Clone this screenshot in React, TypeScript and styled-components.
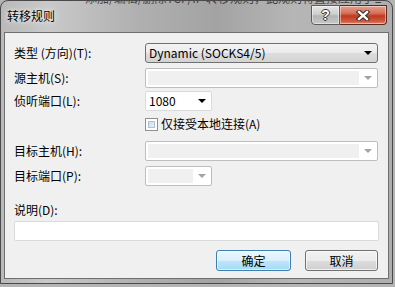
import React from "react";
import styled, { createGlobalStyle } from "styled-components";

const GlobalStyle = createGlobalStyle`
  html, body {
    margin: 0;
    padding: 0;
    background: #b4b4b4;
    font-family: "Noto Sans CJK SC", "Liberation Sans", sans-serif;
  }
`;

const Window = styled.div`
  position: relative;
  box-sizing: border-box;
  width: 393px;
  height: 284px;
  border: 1px solid #4a4a4a;
  border-radius: 8px 8px 0 0;
  background: linear-gradient(
    90deg,
    #b9b9b9 0%,
    #c9c9c9 12%,
    #b0b0b0 35%,
    #a3a3a3 55%,
    #b6b6b6 75%,
    #aeaeae 100%
  );
  display: flex;
  flex-direction: column;
  overflow: hidden;
`;

const GhostStrip = styled.div`
  position: absolute;
  top: 0;
  left: 84px;
  height: 4px;
  width: 296px;
  overflow: hidden;
  opacity: 0.75;
`;

const GhostText = styled.div`
  margin-top: -9px;
  font-size: 12px;
  line-height: 12px;
  color: #1a1a1a;
  white-space: nowrap;
`;

const TitleBar = styled.div`
  height: 31px;
  display: flex;
  justify-content: space-between;
  align-items: flex-start;
  padding: 0 5px 0 6px;
`;

const Title = styled.div`
  margin-top: 7px;
  font-size: 12px;
  line-height: 16px;
  color: #000;
  text-shadow: 0 0 6px rgba(255, 255, 255, 0.9), 0 0 3px rgba(255, 255, 255, 0.8);
`;

const CaptionGroup = styled.div`
  display: flex;
  margin-top: 4px;
`;

const CaptionButton = styled.div<{ $kind: "help" | "close" }>`
  box-sizing: border-box;
  height: 20px;
  width: ${(p) => (p.$kind === "help" ? "29px" : "47px")};
  display: flex;
  align-items: center;
  justify-content: center;
  border: 1px solid ${(p) => (p.$kind === "help" ? "#5c5c5c" : "#5b2a20")};
  border-left-width: ${(p) => (p.$kind === "help" ? "1px" : "0")};
  border-radius: ${(p) => (p.$kind === "help" ? "0 0 0 4px" : "0 0 4px 0")};
  background: ${(p) =>
    p.$kind === "help"
      ? "linear-gradient(180deg, #e6e6e6 0%, #cfcfcf 45%, #b4b4b4 55%, #c8c8c8 100%)"
      : "linear-gradient(180deg, #e6a08e 0%, #d6705a 40%, #c0391f 55%, #cf5a40 85%, #e08a70 100%)"};
  box-shadow: inset 0 0 0 1px rgba(255, 255, 255, 0.45);
`;

const HelpGlyph = styled.span`
  font-family: "Liberation Sans", sans-serif;
  font-weight: 700;
  font-size: 14px;
  line-height: 14px;
  color: #fff;
  text-shadow: 1px 0 0 #333, -1px 0 0 #333, 0 1px 0 #333, 0 -1px 0 #333;
`;

const Client = styled.div`
  box-sizing: border-box;
  margin-left: 3px;
  width: 385px;
  height: 247px;
  border: 1px solid #6f6f6f;
  background: #f0f0f0;
  padding: 10px 10px 0 9px;
  display: flex;
  flex-direction: column;
  font-size: 12px;
  color: #000;
`;

const Row = styled.div<{ $mt: number }>`
  display: grid;
  grid-template-columns: 131px 1fr;
  align-items: center;
  height: 20px;
  margin-top: ${(p) => p.$mt}px;
`;

const Label = styled.div`
  font-size: 12px;
  line-height: 16px;
  white-space: nowrap;
`;

const Combo = styled.div<{ $w: number; $variant: "button" | "edit" | "disabled" }>`
  box-sizing: border-box;
  width: ${(p) => p.$w}px;
  height: 20px;
  display: flex;
  align-items: center;
  border-radius: ${(p) => (p.$variant === "button" ? "3px" : "2px")};
  border: 1px solid
    ${(p) =>
      p.$variant === "button" ? "#707070" : p.$variant === "edit" ? "#dadada" : "#bdbdbd"};
  background: ${(p) =>
    p.$variant === "button"
      ? "linear-gradient(180deg, #f3f3f3 0%, #ebebeb 50%, #dddddd 51%, #d3d3d3 100%)"
      : "#ffffff"};
`;

const ComboText = styled.div`
  flex: 1;
  padding-left: 3px;
  font-size: 12px;
  line-height: 16px;
  white-space: nowrap;
`;

const ComboFill = styled.div`
  flex: 1;
  align-self: stretch;
  margin: 2px 0 2px 2px;
  background: #f0f0f0;
`;

const ArrowBox = styled.div`
  width: 18px;
  display: flex;
  justify-content: center;
  align-items: center;
`;

const Arrow = styled.div<{ $disabled?: boolean }>`
  width: 0;
  height: 0;
  border-left: 4px solid transparent;
  border-right: 4px solid transparent;
  border-top: 4px solid ${(p) => (p.$disabled ? "#a3a3a3" : "#000")};
`;

const CheckLine = styled.div`
  grid-column: 2;
  display: flex;
  align-items: center;
  gap: 3px;
`;

const CheckBox = styled.div`
  box-sizing: border-box;
  width: 13px;
  height: 13px;
  border: 1px solid #8f8f8f;
  background: #fff;
  padding: 2px;
  display: flex;
`;

const CheckInner = styled.div`
  flex: 1;
  border: 1px solid #a9c3da;
  background: linear-gradient(135deg, #cfdbe8 0%, #eaf1f8 100%);
`;

const NoteLabel = styled(Label)`
  margin-top: 16px;
  height: 16px;
`;

const TextInput = styled.div`
  box-sizing: border-box;
  margin-top: 3px;
  width: 365px;
  height: 20px;
  border: 1px solid #dadada;
  border-radius: 2px;
  background: #fff;
`;

const ButtonRow = styled.div`
  margin-top: 9px;
  display: flex;
  justify-content: flex-end;
  gap: 14px;
`;

const Button = styled.div<{ $default?: boolean; $w: number }>`
  box-sizing: border-box;
  width: ${(p) => p.$w}px;
  height: 21px;
  display: flex;
  align-items: center;
  justify-content: center;
  font-size: 12px;
  border-radius: 3px;
  border: 1px solid ${(p) => (p.$default ? "#3c7fb1" : "#707070")};
  background: ${(p) =>
    p.$default
      ? "linear-gradient(180deg, #eaf6fd 0%, #d9f0fc 50%, #bee6fd 51%, #a7d9f5 100%)"
      : "linear-gradient(180deg, #f2f2f2 0%, #ebebeb 50%, #dddddd 51%, #cfcfcf 100%)"};
  box-shadow: inset 0 0 0 1px ${(p) => (p.$default ? "rgba(255,255,255,0.6)" : "rgba(255,255,255,0.7)")};
`;

const CloseIcon = () => (
  <svg width="14" height="11" viewBox="0 0 14 11">
    <g strokeLinecap="square">
      <line x1="3" y1="2" x2="11" y2="9" stroke="#3a2a26" strokeWidth="4.4" />
      <line x1="11" y1="2" x2="3" y2="9" stroke="#3a2a26" strokeWidth="4.4" />
      <line x1="3" y1="2" x2="11" y2="9" stroke="#ffffff" strokeWidth="2.4" />
      <line x1="11" y1="2" x2="3" y2="9" stroke="#ffffff" strokeWidth="2.4" />
    </g>
  </svg>
);

const DisabledCombo = ({ w }: { w: number }) => (
  <Combo $w={w} $variant="disabled">
    <ComboFill />
    <ArrowBox>
      <Arrow $disabled />
    </ArrowBox>
  </Combo>
);

export default function App() {
  return (
    <>
      <GlobalStyle />
      <Window>
        <GhostStrip>
          <GhostText>添加/编辑/删除TCP/IP 转移规则，此规则将直接应用于当前连接</GhostText>
        </GhostStrip>
        <TitleBar>
          <Title>转移规则</Title>
          <CaptionGroup>
            <CaptionButton $kind="help">
              <HelpGlyph>?</HelpGlyph>
            </CaptionButton>
            <CaptionButton $kind="close">
              <CloseIcon />
            </CaptionButton>
          </CaptionGroup>
        </TitleBar>
        <Client>
          <Row $mt={0}>
            <Label>类型 (方向)(T):</Label>
            <Combo $w={233} $variant="button">
              <ComboText>Dynamic (SOCKS4/5)</ComboText>
              <ArrowBox>
                <Arrow />
              </ArrowBox>
            </Combo>
          </Row>
          <Row $mt={5}>
            <Label>源主机(S):</Label>
            <DisabledCombo w={233} />
          </Row>
          <Row $mt={3}>
            <Label>侦听端口(L):</Label>
            <Combo $w={67} $variant="edit">
              <ComboText>1080</ComboText>
              <ArrowBox>
                <Arrow />
              </ArrowBox>
            </Combo>
          </Row>
          <Row $mt={3}>
            <CheckLine>
              <CheckBox>
                <CheckInner />
              </CheckBox>
              <Label>仅接受本地连接(A)</Label>
            </CheckLine>
          </Row>
          <Row $mt={7}>
            <Label>目标主机(H):</Label>
            <DisabledCombo w={233} />
          </Row>
          <Row $mt={5}>
            <Label>目标端口(P):</Label>
            <DisabledCombo w={67} />
          </Row>
          <NoteLabel>说明(D):</NoteLabel>
          <TextInput />
          <ButtonRow>
            <Button $default $w={75}>确定</Button>
            <Button $w={73}>取消</Button>
          </ButtonRow>
        </Client>
      </Window>
    </>
  );
}
